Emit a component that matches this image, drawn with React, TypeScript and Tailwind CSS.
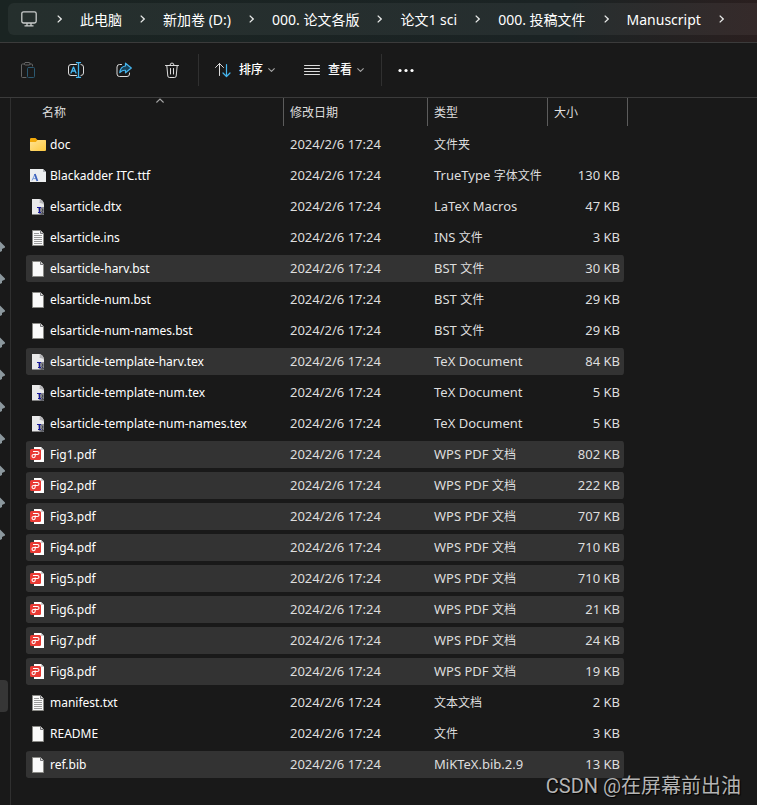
import { Fragment, type ReactNode } from 'react';

type FileKind = 'folder' | 'font' | 'tex' | 'text' | 'blank' | 'pdf';

interface FileRow {
  name: string;
  type: string;
  size: string;
  kind: FileKind;
  selected?: boolean;
}

const MODIFIED = '2024/2/6 17:24';

const crumbs = ['此电脑', '新加卷 (D:)', '000. 论文各版', '论文1 sci', '000. 投稿文件', 'Manuscript'];

const files: FileRow[] = [
  { name: 'doc', type: '文件夹', size: '', kind: 'folder' },
  { name: 'Blackadder ITC.ttf', type: 'TrueType 字体文件', size: '130 KB', kind: 'font' },
  { name: 'elsarticle.dtx', type: 'LaTeX Macros', size: '47 KB', kind: 'tex' },
  { name: 'elsarticle.ins', type: 'INS 文件', size: '3 KB', kind: 'text' },
  { name: 'elsarticle-harv.bst', type: 'BST 文件', size: '30 KB', kind: 'blank', selected: true },
  { name: 'elsarticle-num.bst', type: 'BST 文件', size: '29 KB', kind: 'blank' },
  { name: 'elsarticle-num-names.bst', type: 'BST 文件', size: '29 KB', kind: 'blank' },
  { name: 'elsarticle-template-harv.tex', type: 'TeX Document', size: '84 KB', kind: 'tex', selected: true },
  { name: 'elsarticle-template-num.tex', type: 'TeX Document', size: '5 KB', kind: 'tex' },
  { name: 'elsarticle-template-num-names.tex', type: 'TeX Document', size: '5 KB', kind: 'tex' },
  { name: 'Fig1.pdf', type: 'WPS PDF 文档', size: '802 KB', kind: 'pdf', selected: true },
  { name: 'Fig2.pdf', type: 'WPS PDF 文档', size: '222 KB', kind: 'pdf', selected: true },
  { name: 'Fig3.pdf', type: 'WPS PDF 文档', size: '707 KB', kind: 'pdf', selected: true },
  { name: 'Fig4.pdf', type: 'WPS PDF 文档', size: '710 KB', kind: 'pdf', selected: true },
  { name: 'Fig5.pdf', type: 'WPS PDF 文档', size: '710 KB', kind: 'pdf', selected: true },
  { name: 'Fig6.pdf', type: 'WPS PDF 文档', size: '21 KB', kind: 'pdf', selected: true },
  { name: 'Fig7.pdf', type: 'WPS PDF 文档', size: '24 KB', kind: 'pdf', selected: true },
  { name: 'Fig8.pdf', type: 'WPS PDF 文档', size: '19 KB', kind: 'pdf', selected: true },
  { name: 'manifest.txt', type: '文本文档', size: '2 KB', kind: 'text' },
  { name: 'README', type: '文件', size: '3 KB', kind: 'blank' },
  { name: 'ref.bib', type: 'MiKTeX.bib.2.9', size: '13 KB', kind: 'blank', selected: true },
];

// Latin runs are set one step larger than the Chinese ones
function MixedText({ text }: { text: string }) {
  const parts = text.split(/([\u4e00-\u9fff]+)/).filter(Boolean);
  return (
    <>
      {parts.map((part, i) =>
        /[\u4e00-\u9fff]/.test(part) ? (
          <span key={i} className="text-[12px]">{part}</span>
        ) : (
          <Fragment key={i}>{part}</Fragment>
        )
      )}
    </>
  );
}

function Chevron({ dir }: { dir: 'right' | 'down' | 'up' }) {
  if (dir === 'right') {
    return (
      <svg className="w-[5px] h-2 shrink-0" viewBox="0 0 5 8" fill="none" stroke="#e4e6e5" strokeWidth="1.3" aria-hidden="true">
        <path d="M.7.6 4.2 4 .7 7.4" />
      </svg>
    );
  }
  if (dir === 'up') {
    return (
      <svg className="w-2 h-[5px] shrink-0" viewBox="0 0 8 5" fill="none" stroke="#a5a5a5" strokeWidth="1.1" aria-hidden="true">
        <path d="M.4 4.500 4 1 7.600 4.500" />
      </svg>
    );
  }
  return (
    <svg className="w-[7px] h-1 shrink-0" viewBox="0 0 7 4" fill="none" stroke="#a5a5a5" strokeWidth="1.1" aria-hidden="true">
      <path d="M.4.4 3.5 3.4 6.6.4" />
    </svg>
  );
}

function Page({ children }: { children?: ReactNode }) {
  return (
    <>
      <path d="M2.5.5h8l3 3v12h-11z" fill="#fafafa" stroke="#8a8a86" />
      <path d="M10.5.5v3h3" fill="#d8d8d8" stroke="#77777a" />
      {children}
    </>
  );
}

function FileIcon({ kind }: { kind: FileKind }) {
  return (
    <svg className="w-4 h-4 shrink-0" viewBox="0 0 16 16" fill="none" aria-hidden="true">
      {kind === 'folder' && (
        <>
          <defs>
            <linearGradient id="folder" x1="0" y1="0" x2="1" y2="1">
              <stop offset="0" stopColor="#ffe394" />
              <stop offset="1" stopColor="#fdc93f" />
            </linearGradient>
          </defs>
          <path d="M0 2.200Q0 1 1.200 1h4.300l2 2H15q1 0 1 1v3H0z" fill="#f2a90a" />
          <path d="M0 5h5.800L7.600 3H15q1 0 1 1v9q0 1-1 1H1q-1 0-1-1z" fill="url(#folder)" />
        </>
      )}
      {kind === 'font' && (
        <>
          <path d="M0 1h13l3 3v10H0z" fill="#eceeef" />
          <path d="M13 1v3h3z" fill="#aeb2b5" />
          <path d="M2 12.500 5 6M3 10.600h3" stroke="#7fa0dd" />
          <path d="M4.800 6l2.600 7" stroke="#3e63bd" strokeWidth="1.800" />
        </>
      )}
      {kind === 'tex' && (
        <>
          <path d="M2 0h8q4 2 4 6v9.500H2z" fill="#e9e9ea" />
          <path d="M9.500 0q.7 2.500 0 4 2.500-.3 4.500 1.500Q13.500 1 9.500 0z" fill="#b5b5b8" />
          <path d="M8 8h6v8l-5-.5z" fill="#8a8b93" />
          <path d="M7 8.500h4M9.500 8.500v5M8 13.500h3" stroke="#17179c" strokeWidth="1.200" />
          <path d="M12 9.500q2 1.500 0 3l1.500 2.500h-3" stroke="#3b3c44" />
        </>
      )}
      {kind === 'blank' && <Page />}
      {kind === 'text' && (
        <Page>
          <path d="M4 3.500h5M4 5.500h8M4 7.500h8M4 9.500h8M4 11.500h8M4 13.500h8" stroke="#9a9a9a" />
        </Page>
      )}
      {kind === 'pdf' && (
        <>
          <path d="M4 0h7l3 3v12H4z" fill="#fff" />
          <path d="M11 0v3h3z" fill="#cfcfcf" />
          <rect y="2" width="11" height="11" rx="1.500" fill="#e93a34" />
          <path d="M3 4.500h4.300q1.700 0 1.700 1.500T7.300 7.500H3.700q-1.700 0-1.700 1.600t1.600 1.600q1.600 0 1.600-1.600V6.500" stroke="#fff" strokeWidth="1.100" />
        </>
      )}
    </svg>
  );
}

function ToolIcon({ children }: { children: ReactNode }) {
  return (
    <svg className="w-4 h-4 shrink-0" viewBox="0 0 16 16" fill="none" stroke="#dcdcdc" strokeLinecap="round" strokeLinejoin="round" aria-hidden="true">
      {children}
    </svg>
  );
}

function AddressBar() {
  return (
    <header className="bg-linear-to-r from-[#1a2422] via-[#1b2324] via-75% to-[#2a1f1f] pt-[3px] pb-[7px] pl-2 border-b border-[#3b3b3b]">
      <nav aria-label="路径" className="flex items-center h-8 pl-[13px] rounded-l-md bg-white/5 text-[14px] text-white overflow-hidden whitespace-nowrap">
        <svg className="w-4 h-4 shrink-0 mr-5" viewBox="0 0 16 16" fill="none" stroke="#c9cccb" strokeWidth="1.300" aria-hidden="true">
          <rect x=".8" y=".8" width="14.400" height="11.200" rx="1.800" />
          <path d="M6 12v2.500M10 12v2.500M3.500 14.800h9" />
        </svg>
        <ol className="flex items-center gap-[18px]">
          {crumbs.map(c => (
            <li key={c} className="flex items-center gap-[18px]">
              <Chevron dir="right" />
              <a href="#">{c}</a>
            </li>
          ))}
          <li className="flex"><Chevron dir="right" /></li>
        </ol>
      </nav>
    </header>
  );
}

function Toolbar() {
  return (
    <div role="toolbar" aria-label="命令" className="flex items-center h-[55px] pl-1 border-b border-[#3b3b3b] text-[12px] font-medium text-white">
      <button aria-label="粘贴" disabled className="w-12 h-8 flex items-center justify-center">
        <ToolIcon>
          <path d="M4.500 2H2.500q-1 0-1 1v11.500q0 1 1 1H6M10 2h1.500q1 0 1 1v1" stroke="#666" />
          <rect x="4.500" y=".5" width="5.500" height="2.500" rx="1" stroke="#666" />
          <rect x="7.500" y="5.500" width="7" height="10" rx="1" stroke="#2c5971" />
        </ToolIcon>
      </button>
      <button aria-label="重命名" className="w-12 h-8 flex items-center justify-center">
        <ToolIcon>
          <path d="M8.500 2.500H3q-2.500 0-2.500 2.500v6q0 2.500 2.500 2.500h5.500M13 2.500q2.500 0 2.500 2.500v6q0 2.500-2.500 2.500" />
          <path d="M3 11l2.500-6L8 11M4 9h3" stroke="#45b5ee" strokeWidth="1.300" />
          <path d="M8.500.5h4M8.500 15.500h4M10.500.5v15" stroke="#45b5ee" strokeWidth="1.300" />
        </ToolIcon>
      </button>
      <button aria-label="共享" className="w-12 h-8 flex items-center justify-center">
        <ToolIcon>
          <path d="M5.500 2.500H3.500Q1 2.500 1 5v7q0 2.500 2.500 2.500h7.500q2.500 0 2.500-2.500v-1" />
          <path d="M9.500 1.200 15.300 6l-5.800 4.800V8.300Q6.300 8 3.800 10.500 4.500 4.500 9.500 4z" stroke="#45b5ee" strokeWidth="1.200" fill="#174158" />
        </ToolIcon>
      </button>
      <button aria-label="删除" className="w-12 h-8 flex items-center justify-center">
        <ToolIcon>
          <path d="M1.500 3.500h13M6 3.300q0-2.300 2-2.300t2 2.300M2.800 3.500l1 10.500q.2 1.500 1.500 1.500h5.400q1.300 0 1.500-1.500l1-10.500M6.500 6.500v5.500M9.500 6.500v5.500" />
        </ToolIcon>
      </button>
      <span className="w-px h-8 ml-0.5 bg-[#303030]" />
      <button className="flex items-center gap-2 h-8 ml-4">
        <ToolIcon>
          <path d="M4.500 13.500v-12M.5 5.500l4-4 4 4" />
          <path d="M11.500 2.500v12M8 11l3.500 3.500L15 11" stroke="#45b5ee" strokeWidth="1.200" />
        </ToolIcon>
        <span className="flex items-center gap-[5px]">排序<Chevron dir="down" /></span>
      </button>
      <button className="flex items-center gap-2 h-8 ml-[29px]">
        <ToolIcon>
          <path d="M.5 3.500h15M.5 6.500h15M.5 9.500h15M.5 12.500h15" />
        </ToolIcon>
        <span className="flex items-center gap-[5px]">查看<Chevron dir="down" /></span>
      </button>
      <span className="w-px h-8 ml-[17px] bg-[#303030]" />
      <button aria-label="查看更多" className="h-8 ml-4">
        <svg className="w-4 h-4" viewBox="0 0 16 16" fill="#fff" aria-hidden="true">
          <circle cx="2" cy="8.500" r="1.600" />
          <circle cx="8" cy="8.500" r="1.600" />
          <circle cx="14" cy="8.500" r="1.600" />
        </svg>
      </button>
    </div>
  );
}

// Only the sliver of the navigation pane that stays visible
function NavPane() {
  return (
    <aside className="w-[11px] shrink-0 pt-[133px] border-r border-[#2f2f2f] overflow-hidden">
      {Array.from({ length: 10 }, (_, i) => (
        <div key={i} className="h-8 flex items-center">
          <svg className="w-[5px] h-3" viewBox="0 0 5 12" fill="#8b979d" aria-hidden="true">
            <path d="M0 .5 5 5.500v1L2 8v2l-2 1z" />
          </svg>
        </div>
      ))}
      <div className="mt-[129px] w-2 h-8 rounded-r-sm bg-[#363636]" />
    </aside>
  );
}

const headerCell = 'p-0 text-left align-top font-normal';
const headerButton = 'block w-full h-7 text-left border-r border-[#5c5c5c]';
const cell = 'h-[31px] p-0 border-y-2 border-transparent bg-clip-padding truncate';

function FileTable() {
  return (
    <table className="self-start w-[602px] ml-[15px] table-fixed border-separate border-spacing-0 text-[13px] leading-[17px] text-[#dedede]">
      <colgroup>
        <col className="w-[258px]" />
        <col className="w-[144px]" />
        <col className="w-[120px]" />
        <col className="w-[80px]" />
      </colgroup>
      <thead>
        <tr className="h-[31px] text-[12px]">
          <th scope="col" aria-sort="ascending" className={`${headerCell} relative`}>
            <button className={`${headerButton} pl-4`}>名称</button>
            <span className="absolute top-0 left-[130px] flex"><Chevron dir="up" /></span>
          </th>
          <th scope="col" className={headerCell}><button className={`${headerButton} pl-1.5`}>修改日期</button></th>
          <th scope="col" className={headerCell}><button className={`${headerButton} pl-1.5`}>类型</button></th>
          <th scope="col" className={headerCell}><button className={`${headerButton} pl-1.5`}>大小</button></th>
        </tr>
      </thead>
      <tbody>
        {files.map(f => {
          const bg = f.selected ? 'bg-[#333333]' : '';
          return (
            <tr key={f.name} aria-selected={!!f.selected}>
              <td className={`${cell} ${bg} pl-1 rounded-l-sm text-[12px] text-white`}>
                <span className="flex items-center gap-1">
                  <FileIcon kind={f.kind} />
                  {f.name}
                </span>
              </td>
              <td className={`${cell} ${bg} pl-1.5`}>{MODIFIED}</td>
              <td className={`${cell} ${bg} pl-1.5`}><MixedText text={f.type} /></td>
              <td className={`${cell} ${bg} pr-1 border-r-4 rounded-r-md text-right`}>{f.size}</td>
            </tr>
          );
        })}
      </tbody>
    </table>
  );
}

export default function App() {
  return (
    <div className="relative min-h-screen flex flex-col bg-[#191919] overflow-hidden font-['Noto_Sans','Noto_Sans_CJK_SC',sans-serif]">
      <AddressBar />
      <Toolbar />
      <main className="flex flex-1">
        <NavPane />
        <FileTable />
      </main>
      <p className="absolute right-4 bottom-1 font-['Roboto','Noto_Sans_CJK_SC',sans-serif] text-[20px] leading-[30px] text-[#b4b4b4] [text-shadow:1px_1px_1px_#000]">
        CSDN @在屏幕前出油
      </p>
    </div>
  );
}
